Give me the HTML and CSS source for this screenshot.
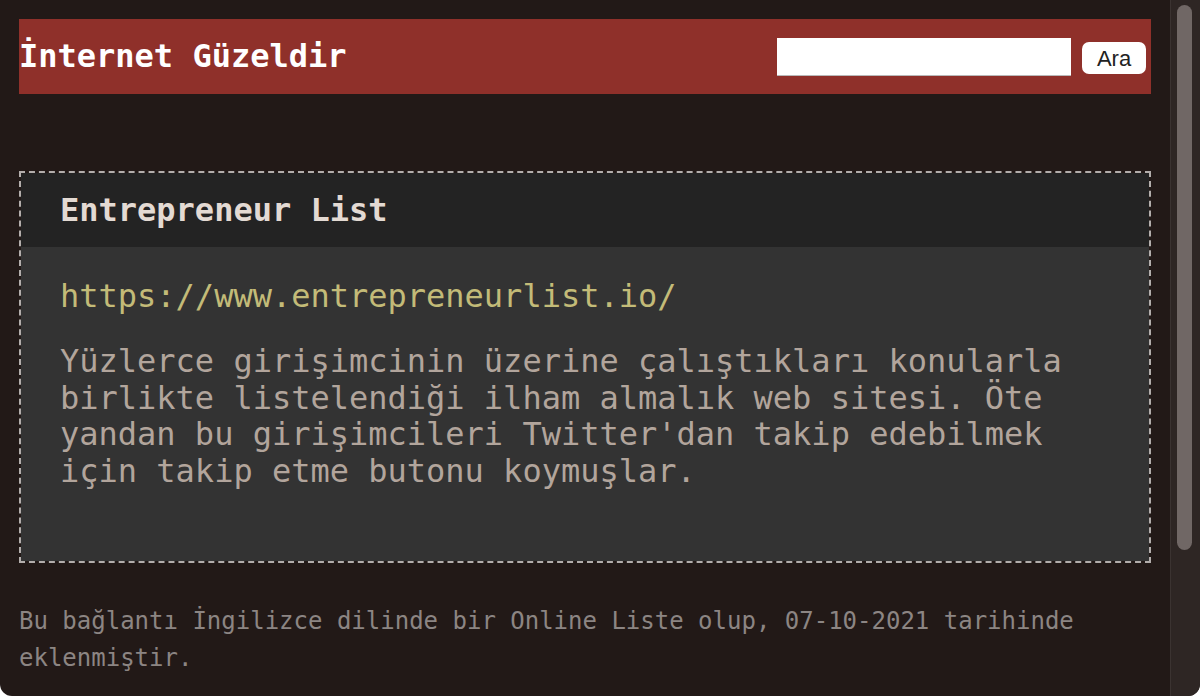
FILE: index.html
```html
<!DOCTYPE html>
<html lang="tr">
<head>
<meta charset="utf-8">
<title>İnternet Güzeldir</title>
<link rel="stylesheet" href="styles.css">
</head>
<body>
<div class="window">
  <div class="page">
    <header class="site-header">
      <h1 class="site-title">İnternet Güzeldir</h1>
      <form class="search">
        <input class="search-input" type="text" aria-label="Ara">
        <button class="search-button" type="button">Ara</button>
      </form>
    </header>
    <article class="card">
      <div class="card-head">
        <h2 class="card-title">Entrepreneur List</h2>
      </div>
      <div class="card-body">
        <p class="card-url">https://www.entrepreneurlist.io/</p>
        <p class="card-desc">Yüzlerce girişimcinin üzerine çalıştıkları konularla birlikte listelendiği ilham almalık web sitesi. Öte yandan bu girişimcileri Twitter'dan takip edebilmek için takip etme butonu koymuşlar.</p>
      </div>
    </article>
    <p class="note">Bu bağlantı İngilizce dilinde bir Online Liste olup, 07-10-2021 tarihinde eklenmiştir.</p>
  </div>
  <div class="scrollbar"><div class="thumb"></div></div>
</div>
</body>
</html>
```

FILE: styles.css
```css
html {
  background: #ffffff;
}
body {
  margin: 0;
  font-family: "DejaVu Sans Mono", monospace;
}
.window {
  display: flex;
  height: 696px;
  background: #221917;
  border-radius: 0 0 12px 12px;
  overflow: hidden;
}
.page {
  flex: 1;
  padding: 19px 19px 0 19px;
  overflow: hidden;
}
.site-header {
  height: 75px;
  background: #8f302a;
  display: flex;
  align-items: center;
  justify-content: space-between;
  padding: 0 5px 0 0;
}
.site-title {
  margin: 0;
  font-size: 32px;
  line-height: 37px;
  font-weight: bold;
  color: #ffffff;
}
.search {
  display: flex;
  align-items: center;
  gap: 11px;
}
.search-input {
  width: 294px;
  height: 38px;
  box-sizing: border-box;
  border: none;
  border-bottom: 1px solid #b9b9b9;
  background: #ffffff;
  margin: 0;
  padding: 0 6px;
}
.search-button {
  width: 64px;
  height: 32px;
  margin: 2px 0 0 0;
  border: none;
  border-radius: 7px;
  background: #ffffff;
  color: #222222;
  font-family: "Liberation Sans", Arial, sans-serif;
  font-size: 22px;
  line-height: 24px;
  padding: 3px 0 0 0;
}
.card {
  margin-top: 77px;
  border: 2px dashed #b3aeac;
}
.card-head {
  height: 74px;
  display: flex;
  align-items: center;
  padding: 0 39px;
  background: #232323;
}
.card-title {
  margin: 0;
  font-size: 32px;
  line-height: 37px;
  font-weight: bold;
  color: #e3dad3;
}
.card-body {
  background: #333333;
  padding: 31px 39px 71px 39px;
}
.card-url {
  margin: 0;
  font-size: 32px;
  line-height: 37px;
  color: #c3bb78;
}
.card-desc {
  margin: 28px 0 0 0;
  font-size: 32px;
  line-height: 36.7px;
  color: #b2a59c;
}
.note {
  margin: 40px 0 0 0;
  font-size: 24px;
  line-height: 37px;
  color: #8c8583;
}
.scrollbar {
  width: 29px;
  flex: none;
  background: #2e2624;
  border-left: 1px solid #3b3331;
  display: flex;
  justify-content: center;
}
.thumb {
  width: 15px;
  height: 545px;
  margin-top: 5px;
  margin-right: 2px;
  border-radius: 8px;
  background: #706765;
}
```
